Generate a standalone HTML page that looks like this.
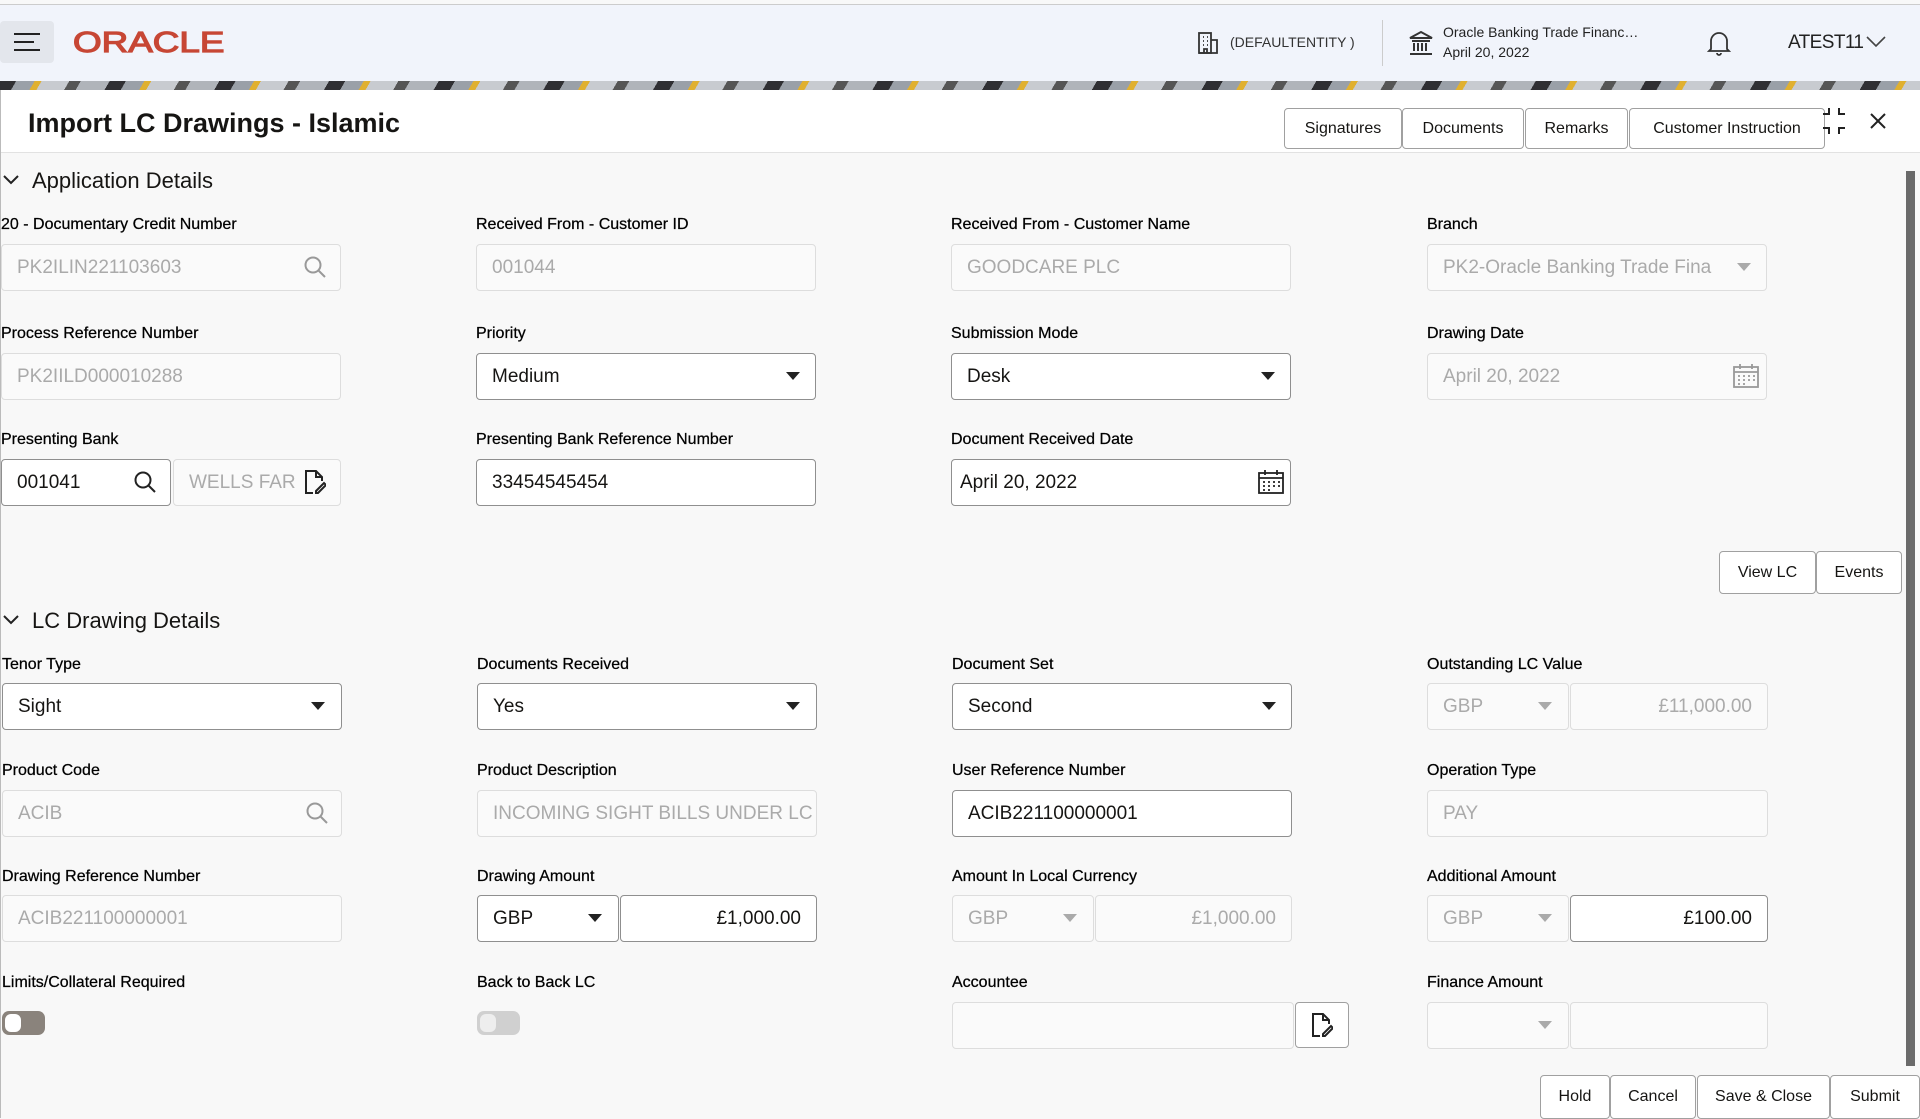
<!DOCTYPE html>
<html><head><meta charset="utf-8"><style>
*{box-sizing:border-box;margin:0;padding:0}
body{width:1920px;height:1118px;overflow:hidden;background:#f8f8f8;font-family:"Liberation Sans",sans-serif;color:#161513;position:relative}
.a{position:absolute}
.hdr{left:0;top:4px;width:1920px;height:77px;background:#f1f4fb;border-top:1px solid #ccc}
.band{left:0;top:81px;width:1920px;height:9px;background:repeating-linear-gradient(120deg,#2f2f33 0 14px,#9aa0a8 14px 30px,#e0b030 30px 36px,#c8cbd0 36px 60px,#555 60px 70px,#b0b4ba 70px 95px)}
.panel{left:0;top:90px;width:1920px;height:1028px;background:#f8f8f8;border-left:1px solid #bbb}
.titlebar{left:1px;top:90px;width:1919px;height:63px;background:#fff;border-bottom:1px solid #e2e2e2}
.lbl{font-size:16px;color:#000;white-space:nowrap;-webkit-text-stroke:0.25px #000}
.in{height:47px;border:1px solid #ddd;border-radius:4px;background:rgba(255,255,255,.35);font-size:19px;color:#aaa;padding:0 15px;line-height:45px;white-space:nowrap;overflow:hidden}
.en{border-color:#8f8f8f;background:#fff;color:#161513}
.sec{font-size:22px;color:#161513}
.btn{border:1px solid #a0a0a0;border-radius:4px;background:#fff;font-size:16px;text-align:center;color:#161513}
.tri{position:absolute;width:0;height:0;border-left:7px solid transparent;border-right:7px solid transparent;border-top:8px solid #222}
.tri.g{border-top-color:#aaa}
svg{position:absolute}
</style></head><body>
<div class="a hdr"></div>
<div class="a" style="left:0;top:21px;width:54px;height:42px;background:#e3e6ec;border-radius:4px"></div>
<div class="a" style="left:14px;top:33px;width:26px;height:2px;background:#222"></div>
<div class="a" style="left:14px;top:41px;width:20px;height:2px;background:#222"></div>
<div class="a" style="left:14px;top:49px;width:26px;height:2px;background:#222"></div>
<div class="a" style="left:73px;top:27px;font-size:29px;color:#c74634;-webkit-text-stroke:1.2px #c74634;transform:scaleX(1.27);transform-origin:left">ORACLE</div>
<svg style="left:1196px;top:31px" width="24" height="24" viewBox="0 0 24 24" fill="none" stroke="#333" stroke-width="1.8"><rect x="3" y="2" width="12" height="20"/><path d="M15 9h6v13H3M7 6h1M11 6h1M7 10h1M11 10h1M7 14h1M11 14h1M8 22v-4h3v4"/></svg>
<div class="a" style="left:1230px;top:34px;font-size:14px;color:#333">(DEFAULTENTITY )</div>
<div class="a" style="left:1382px;top:20px;width:1px;height:46px;background:#ccc"></div>
<svg style="left:1408px;top:30px" width="26" height="26" viewBox="0 0 26 26" fill="none" stroke="#333" stroke-width="2"><path d="M2 8L13 2l11 6zM4 11h18M6 13v8M10 13v8M14 13v8M18 13v8M2 24h22"/></svg>
<div class="a" style="left:1443px;top:24px;font-size:14px;color:#222">Oracle Banking Trade Financ…</div>
<div class="a" style="left:1443px;top:44px;font-size:14px;color:#222">April 20, 2022</div>
<svg style="left:1707px;top:30px" width="24" height="26" viewBox="0 0 24 26" fill="none" stroke="#333" stroke-width="1.8"><path d="M4 19V11a8 8 0 0116 0v8l2 2H2zM10 23a2 2 0 004 0"/></svg>
<div class="a" style="left:1788px;top:32px;font-size:19px;color:#222;letter-spacing:-0.6px">ATEST11</div>
<svg style="left:1866px;top:36px" width="20" height="12" viewBox="0 0 20 12" fill="none" stroke="#444" stroke-width="1.6"><path d="M1 1l9 9 9-9"/></svg>
<div class="a band"></div>
<div class="a panel"></div>
<div class="a titlebar"></div>
<div class="a" style="left:28px;top:108px;font-size:27px;font-weight:bold;color:#161513">Import LC Drawings - Islamic</div>
<div class="a btn" style="left:1284px;top:108px;width:118px;height:41px;line-height:39px">Signatures</div>
<div class="a btn" style="left:1402px;top:108px;width:122px;height:41px;line-height:39px">Documents</div>
<div class="a btn" style="left:1525px;top:108px;width:103px;height:41px;line-height:39px">Remarks</div>
<div class="a btn" style="left:1629px;top:108px;width:196px;height:41px;line-height:39px">Customer Instruction</div>
<svg style="left:1823px;top:108px" width="22" height="26" viewBox="0 0 22 26" fill="none" stroke="#222" stroke-width="2"><path d="M6 0v6H0M16 0v6h6M6 26v-6H0M16 26v-6h6"/></svg>
<svg style="left:1869px;top:112px" width="18" height="18" viewBox="0 0 18 18" stroke="#222" stroke-width="2"><path d="M2 2l14 14M16 2L2 16"/></svg>
<div class="a" style="left:1906px;top:171px;width:9px;height:895px;background:#6a6a6a"></div>

<svg style="left:3px;top:174px" width="16" height="12" viewBox="0 0 16 12" fill="none" stroke="#222" stroke-width="2"><path d="M1 2l7 7 7-7"/></svg>
<div class="a sec" style="left:32px;top:168px">Application Details</div>

<div class="a lbl" style="left:1px;top:216px">20 - Documentary Credit Number</div>
<div class="a lbl" style="left:476px;top:216px">Received From - Customer ID</div>
<div class="a lbl" style="left:951px;top:216px">Received From - Customer Name</div>
<div class="a lbl" style="left:1427px;top:216px">Branch</div>
<div class="a in" style="left:1px;top:244px;width:340px">PK2ILIN221103603</div>
<svg style="left:303px;top:255px" width="24" height="24" viewBox="0 0 24 24" fill="none" stroke="#999" stroke-width="2"><circle cx="10" cy="10" r="7.5"/><path d="M15.5 15.5L22 22"/></svg>
<div class="a in" style="left:476px;top:244px;width:340px">001044</div>
<div class="a in" style="left:951px;top:244px;width:340px">GOODCARE PLC</div>
<div class="a in" style="left:1427px;top:244px;width:340px">PK2-Oracle Banking Trade Fina</div>
<div class="tri g" style="left:1737px;top:263px"></div>

<div class="a lbl" style="left:1px;top:325px">Process Reference Number</div>
<div class="a lbl" style="left:476px;top:325px">Priority</div>
<div class="a lbl" style="left:951px;top:325px">Submission Mode</div>
<div class="a lbl" style="left:1427px;top:325px">Drawing Date</div>
<div class="a in" style="left:1px;top:353px;width:340px">PK2IILD000010288</div>
<div class="a in en" style="left:476px;top:353px;width:340px">Medium</div>
<div class="tri" style="left:786px;top:372px"></div>
<div class="a in en" style="left:951px;top:353px;width:340px">Desk</div>
<div class="tri" style="left:1261px;top:372px"></div>
<div class="a in" style="left:1427px;top:353px;width:340px">April 20, 2022</div>
<svg style="left:1733px;top:364px" width="26" height="24" viewBox="0 0 26 24" fill="none" stroke="#999" stroke-width="1.8"><rect x="1" y="3" width="24" height="20"/><path d="M1 8h24M7 0v5M19 0v5M5 12h2M10 12h2M15 12h2M20 12h2M5 16h2M10 16h2M15 16h2M20 16h2M5 20h2M10 20h2"/></svg>

<div class="a lbl" style="left:1px;top:431px">Presenting Bank</div>
<div class="a lbl" style="left:476px;top:431px">Presenting Bank Reference Number</div>
<div class="a lbl" style="left:951px;top:431px">Document Received Date</div>
<div class="a in en" style="left:1px;top:459px;width:170px">001041</div>
<svg style="left:133px;top:470px" width="24" height="24" viewBox="0 0 24 24" fill="none" stroke="#222" stroke-width="2"><circle cx="10" cy="10" r="7.5"/><path d="M15.5 15.5L22 22"/></svg>
<div class="a in" style="left:173px;top:459px;width:168px">WELLS FAR</div>
<svg style="left:304px;top:469px" width="22" height="26" viewBox="0 0 22 26" fill="none" stroke="#222" stroke-width="2"><path d="M9 24H2V2h10l6 6v4M12 2v6h6M12 22l8-8 2 2-8 8h-2z"/></svg>
<div class="a in en" style="left:476px;top:459px;width:340px">33454545454</div>
<div class="a in en" style="left:951px;top:459px;width:340px;padding-left:8px">April 20, 2022</div>
<svg style="left:1258px;top:470px" width="26" height="24" viewBox="0 0 26 24" fill="none" stroke="#222" stroke-width="1.8"><rect x="1" y="3" width="24" height="20"/><path d="M1 8h24M7 0v5M19 0v5M5 12h2M10 12h2M15 12h2M20 12h2M5 16h2M10 16h2M15 16h2M20 16h2M5 20h2M10 20h2"/></svg>

<div class="a btn" style="left:1719px;top:551px;width:97px;height:43px;line-height:41px">View LC</div>
<div class="a btn" style="left:1816px;top:551px;width:86px;height:43px;line-height:41px">Events</div>

<svg style="left:3px;top:614px" width="16" height="12" viewBox="0 0 16 12" fill="none" stroke="#222" stroke-width="2"><path d="M1 2l7 7 7-7"/></svg>
<div class="a sec" style="left:32px;top:608px">LC Drawing Details</div>

<div class="a lbl" style="left:2px;top:656px">Tenor Type</div>
<div class="a lbl" style="left:477px;top:656px">Documents Received</div>
<div class="a lbl" style="left:952px;top:656px">Document Set</div>
<div class="a lbl" style="left:1427px;top:656px">Outstanding LC Value</div>
<div class="a in en" style="left:2px;top:683px;width:340px">Sight</div>
<div class="tri" style="left:311px;top:702px"></div>
<div class="a in en" style="left:477px;top:683px;width:340px">Yes</div>
<div class="tri" style="left:786px;top:702px"></div>
<div class="a in en" style="left:952px;top:683px;width:340px">Second</div>
<div class="tri" style="left:1262px;top:702px"></div>
<div class="a in" style="left:1427px;top:683px;width:142px">GBP</div>
<div class="tri g" style="left:1538px;top:702px"></div>
<div class="a in" style="left:1570px;top:683px;width:198px;text-align:right">£11,000.00</div>

<div class="a lbl" style="left:2px;top:762px">Product Code</div>
<div class="a lbl" style="left:477px;top:762px">Product Description</div>
<div class="a lbl" style="left:952px;top:762px">User Reference Number</div>
<div class="a lbl" style="left:1427px;top:762px">Operation Type</div>
<div class="a in" style="left:2px;top:790px;width:340px">ACIB</div>
<svg style="left:305px;top:801px" width="24" height="24" viewBox="0 0 24 24" fill="none" stroke="#999" stroke-width="2"><circle cx="10" cy="10" r="7.5"/><path d="M15.5 15.5L22 22"/></svg>
<div class="a in" style="left:477px;top:790px;width:340px">INCOMING SIGHT BILLS UNDER LC F</div>
<div class="a in en" style="left:952px;top:790px;width:340px">ACIB221100000001</div>
<div class="a in" style="left:1427px;top:790px;width:341px">PAY</div>

<div class="a lbl" style="left:2px;top:868px">Drawing Reference Number</div>
<div class="a lbl" style="left:477px;top:868px">Drawing Amount</div>
<div class="a lbl" style="left:952px;top:868px">Amount In Local Currency</div>
<div class="a lbl" style="left:1427px;top:868px">Additional Amount</div>
<div class="a in" style="left:2px;top:895px;width:340px">ACIB221100000001</div>
<div class="a in en" style="left:477px;top:895px;width:142px">GBP</div>
<div class="tri" style="left:588px;top:914px"></div>
<div class="a in en" style="left:620px;top:895px;width:197px;text-align:right">£1,000.00</div>
<div class="a in" style="left:952px;top:895px;width:142px">GBP</div>
<div class="tri g" style="left:1063px;top:914px"></div>
<div class="a in" style="left:1095px;top:895px;width:197px;text-align:right">£1,000.00</div>
<div class="a in" style="left:1427px;top:895px;width:142px">GBP</div>
<div class="tri g" style="left:1538px;top:914px"></div>
<div class="a in en" style="left:1570px;top:895px;width:198px;text-align:right">£100.00</div>

<div class="a lbl" style="left:2px;top:974px">Limits/Collateral Required</div>
<div class="a lbl" style="left:477px;top:974px">Back to Back LC</div>
<div class="a lbl" style="left:952px;top:974px">Accountee</div>
<div class="a lbl" style="left:1427px;top:974px">Finance Amount</div>
<div class="a" style="left:2px;top:1011px;width:43px;height:24px;border-radius:7px;background:#8a837c"></div>
<div class="a" style="left:5px;top:1014px;width:16px;height:18px;border-radius:6px;background:#fff"></div>
<div class="a" style="left:477px;top:1011px;width:43px;height:24px;border-radius:7px;background:#d0d0d0"></div>
<div class="a" style="left:480px;top:1014px;width:16px;height:18px;border-radius:6px;background:#eee"></div>
<div class="a in" style="left:952px;top:1002px;width:342px"></div>
<div class="a btn" style="left:1295px;top:1002px;width:54px;height:46px"></div>
<svg style="left:1311px;top:1012px" width="22" height="26" viewBox="0 0 22 26" fill="none" stroke="#222" stroke-width="2"><path d="M9 24H2V2h10l6 6v4M12 2v6h6M12 22l8-8 2 2-8 8h-2z"/></svg>
<div class="a in" style="left:1427px;top:1002px;width:142px"></div>
<div class="tri g" style="left:1538px;top:1021px"></div>
<div class="a in" style="left:1570px;top:1002px;width:198px"></div>

<div class="a btn" style="left:1540px;top:1075px;width:70px;height:44px;line-height:42px">Hold</div>
<div class="a btn" style="left:1610px;top:1075px;width:86px;height:44px;line-height:42px">Cancel</div>
<div class="a btn" style="left:1697px;top:1075px;width:133px;height:44px;line-height:42px">Save &amp; Close</div>
<div class="a btn" style="left:1830px;top:1075px;width:90px;height:44px;line-height:42px">Submit</div>
</body></html>
